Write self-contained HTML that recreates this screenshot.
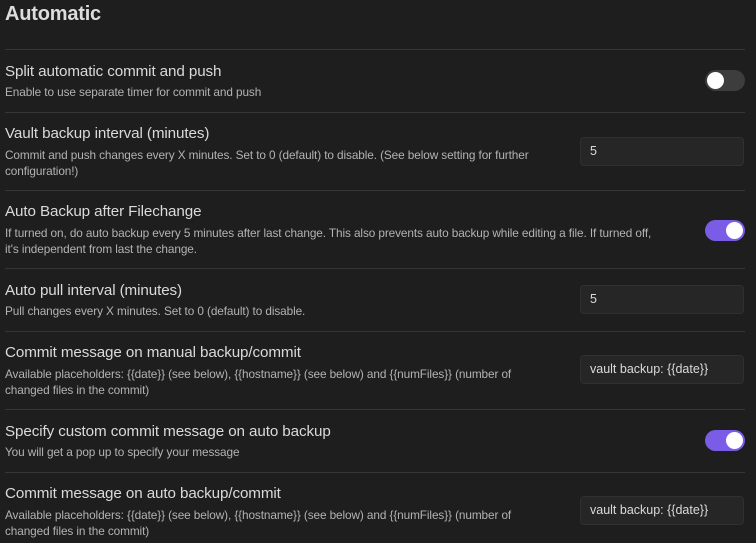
<!DOCTYPE html>
<html><head><style>
body{margin:0;width:756px;height:543px;background:#1e1e1e;font-family:"Liberation Sans",sans-serif;overflow:hidden;position:relative}
.a{position:absolute;white-space:nowrap}
.t{left:5px;top:3px;font-size:20px;color:#dcddde;font-weight:bold;letter-spacing:-0.2px}
.n{left:5px;font-size:15.2px;color:#dadada;letter-spacing:-0.1px}
.d{left:5px;font-size:11.8px;color:#b3b3b3;line-height:16px;letter-spacing:-0.1px}
.hr{position:absolute;left:5px;width:740px;height:1px;background:#363636}
.in{position:absolute;left:580px;width:164px;height:29px;background:#262626;border:1px solid #303030;border-radius:4px;box-sizing:border-box;color:#dadada;font-size:12.5px;line-height:27px;padding-left:9px}
.tg{position:absolute;left:705px;width:40px;height:21px;border-radius:11px}
.tg i{position:absolute;top:2px;width:17px;height:17px;border-radius:50%;background:#fff}
</style></head><body>
<div class="a t">Automatic</div>
<div class="hr" style="top:49px"></div>
<div class="a n" style="top:63px">Split automatic commit and push</div>
<div class="a d" style="top:84px">Enable to use separate timer for commit and push</div>
<div class="tg" style="top:70px;background:#3d3d3d"><i style="left:2px"></i></div>
<div class="hr" style="top:112px"></div>
<div class="a n" style="top:125px">Vault backup interval (minutes)</div>
<div class="a d" style="top:147px">Commit and push changes every X minutes. Set to 0 (default) to disable. (See below setting for further<br>configuration!)</div>
<div class="in" style="top:137px">5</div>
<div class="hr" style="top:190px"></div>
<div class="a n" style="top:203px">Auto Backup after Filechange</div>
<div class="a d" style="top:225px">If turned on, do auto backup every 5 minutes after last change. This also prevents auto backup while editing a file. If turned off,<br>it's independent from last the change.</div>
<div class="tg" style="top:220px;background:#7b5ce6"><i style="left:21px"></i></div>
<div class="hr" style="top:268px"></div>
<div class="a n" style="top:282px">Auto pull interval (minutes)</div>
<div class="a d" style="top:303px">Pull changes every X minutes. Set to 0 (default) to disable.</div>
<div class="in" style="top:285px">5</div>
<div class="hr" style="top:331px"></div>
<div class="a n" style="top:344px">Commit message on manual backup/commit</div>
<div class="a d" style="top:366px">Available placeholders: {{date}} (see below), {{hostname}} (see below) and {{numFiles}} (number of<br>changed files in the commit)</div>
<div class="in" style="top:355px">vault backup: {{date}}</div>
<div class="hr" style="top:409px"></div>
<div class="a n" style="top:423px">Specify custom commit message on auto backup</div>
<div class="a d" style="top:444px">You will get a pop up to specify your message</div>
<div class="tg" style="top:430px;background:#7b5ce6"><i style="left:21px"></i></div>
<div class="hr" style="top:472px"></div>
<div class="a n" style="top:485px">Commit message on auto backup/commit</div>
<div class="a d" style="top:507px">Available placeholders: {{date}} (see below), {{hostname}} (see below) and {{numFiles}} (number of<br>changed files in the commit)</div>
<div class="in" style="top:496px">vault backup: {{date}}</div>
</body></html>
